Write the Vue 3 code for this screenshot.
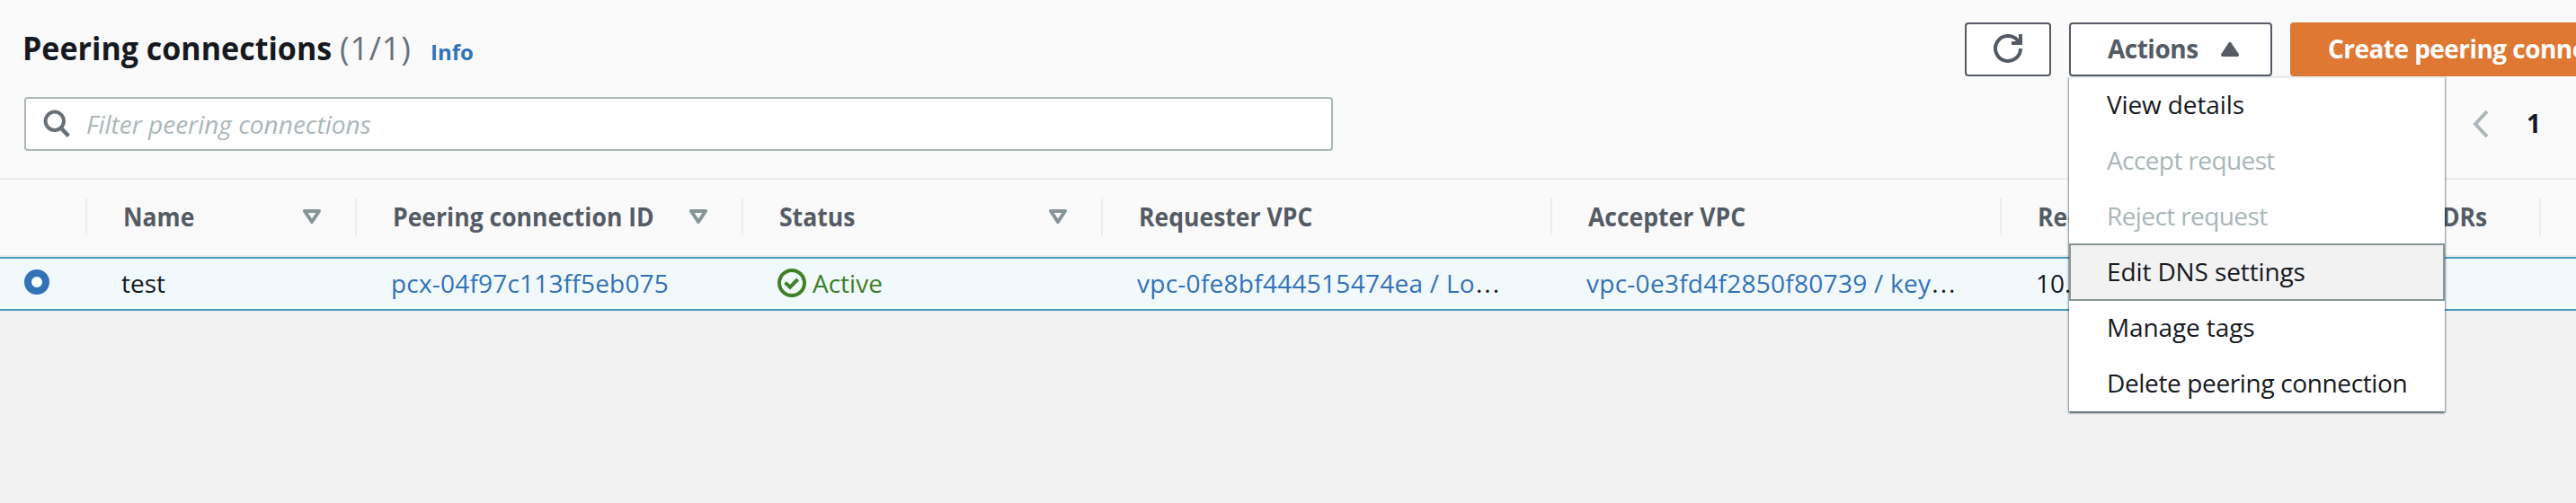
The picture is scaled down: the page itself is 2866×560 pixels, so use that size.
<script setup>
const columns = [
  { label: 'Name', cls: 'w300', sortable: true },
  { label: 'Peering connection ID', cls: 'w430', sortable: true },
  { label: 'Status', cls: 'w400', sortable: true },
  { label: 'Requester VPC', cls: 'w500' },
  { label: 'Accepter VPC', cls: 'w500' },
  { label: 'Requester CIDRs', cls: 'w300' },
  { label: 'Accepter CIDRs', cls: 'w300' }
]
const actions = [
  { label: 'View details' },
  { label: 'Accept request', state: 'disabled' },
  { label: 'Reject request', state: 'disabled' },
  { label: 'Edit DNS settings', state: 'active' },
  { label: 'Manage tags' },
  { label: 'Delete peering connection', state: 'tight' }
]
</script>

<template>
  <div class="page">
    <section class="panel">
      <header class="toolbar">
        <h1><span class="title">Peering connections</span><span class="count">(1/1)</span></h1>
        <a class="info">Info</a>
        <div class="buttons">
          <button class="btn refresh" aria-label="Refresh">
            <svg width="36" height="36" viewBox="0 0 36 36" fill="none" stroke="#545b64" stroke-width="4">
              <path d="M32 18a14 14 0 1 1-3.4-9.2l2.6 3.6" />
              <path d="M32 2v10H22" />
            </svg>
          </button>
          <div class="dropdown">
            <button class="btn toggle">
              <span>Actions</span>
              <svg width="20" height="16" viewBox="0 0 20 16">
                <path d="M10 2 18 14H2z" fill="#545b64" stroke="#545b64" stroke-width="4" stroke-linejoin="round" />
              </svg>
            </button>
            <ul class="menu">
              <li v-for="a in actions" :key="a.label" :class="a.state">{{ a.label }}</li>
            </ul>
          </div>
          <button class="btn primary">Create peering connection</button>
        </div>
      </header>

      <div class="filters">
        <div class="search">
          <svg width="30" height="32" viewBox="0 0 30 32" fill="none" stroke="#687078" stroke-width="4">
            <circle cx="12.8" cy="12.8" r="10.2" />
            <path d="M19.6 20.4 28.4 29.4" stroke-width="4.4" />
          </svg>
          <span>Filter peering connections</span>
        </div>
        <div class="pager">
          <svg width="20" height="32" viewBox="0 0 20 32" fill="none" stroke="#aab7b8" stroke-width="4">
            <path d="M17 2 4 16l13 14" />
          </svg>
          <b>1</b>
        </div>
      </div>

      <div class="thead">
        <div class="sel"></div>
        <div v-for="c in columns" :key="c.label" class="th" :class="c.cls">
          <span>{{ c.label }}</span>
          <svg v-if="c.sortable" width="20" height="16" viewBox="0 0 20 16">
            <path d="M2 2h16l-8 12z" fill="none" stroke="#879596" stroke-width="4" stroke-linejoin="round" />
          </svg>
        </div>
        <div class="th rest"></div>
      </div>

      <div class="row">
        <div class="sel"><i class="radio"></i></div>
        <div class="td w300 name">test</div>
        <div class="td w430 link">pcx-04f97c113ff5eb075</div>
        <div class="td w400 status">
          <svg width="32" height="32" viewBox="0 0 32 32" fill="none" stroke="#3f7f26" stroke-width="4">
            <circle cx="16" cy="16" r="14" />
            <path d="M8.6 15.6 14 20.6 22.6 12" />
          </svg>
          <span>Active</span>
        </div>
        <div class="td w500 vpc"><a class="link">vpc-0fe8bf444515474ea / Lo</a><span class="more">...</span></div>
        <div class="td w500 vpc"><a class="link">vpc-0e3fd4f2850f80739 / key</a><span class="more">...</span></div>
        <div class="td w300">10.0.0.0/16</div>
      </div>
    </section>
  </div>
</template>

<style>
body { background: #f2f2f2; }
</style>

<style scoped>
.page {
  width: 2866px;
  height: 560px;
  overflow: hidden;
  background: #f2f2f2;
  font-family: "Open Sans", "Noto Sans", sans-serif;
  font-size: 28px;
  line-height: 36px;
  color: #16191f;
}
.panel { background: #fafafa; }
.toolbar {
  display: flex;
  align-items: center;
  height: 60px;
  padding: 25px 0 23px 25px;
}
h1 {
  display: flex;
  margin: 0 0 2px;
  width: 454px;
  font-size: 36px;
  line-height: 48px;
  white-space: nowrap;
}
.title {
  width: 353px;
  transform: scaleX(.945);
  transform-origin: left;
}
.count { font-weight: 400; color: #687078; letter-spacing: .8px; }
.info {
  font-size: 24px;
  font-weight: 700;
  color: #3272b6;
  padding-top: 6px;
}
.buttons { display: flex; gap: 20px; margin-left: auto; width: 680px; }
.btn {
  box-sizing: border-box;
  flex: none;
  height: 60px;
  margin: 0;
  padding: 0 0 2px;
  border: 2px solid #545b64;
  border-radius: 4px;
  background: #fff;
  font: 700 28px/36px "Open Sans", "Noto Sans", sans-serif;
  letter-spacing: -.5px;
  color: #545b64;
  white-space: nowrap;
}
.refresh { display: flex; align-items: center; justify-content: center; width: 96px; }
.dropdown { position: relative; }
.toggle { display: flex; align-items: center; gap: 25px; width: 226px; padding-left: 41px; }
.toggle svg { margin-top: 2px; }
.primary {
  width: 420px;
  padding-left: 40px;
  border-color: #df7833;
  background: #df7833;
  color: #fff;
  text-align: left;
  letter-spacing: -.55px;
}
.menu {
  position: absolute;
  z-index: 2;
  top: 60px;
  left: 0;
  box-sizing: border-box;
  width: 418px;
  margin: 0;
  padding: 0 0 1px;
  list-style: none;
  background: #fff;
  box-shadow: 0 2px 2px rgba(0, 28, 36, .5), 1px 1px 2px rgba(0, 28, 36, .3), -1px 1px 2px rgba(0, 28, 36, .3), inset 0 2px #eaeded;
}
.menu li {
  box-sizing: border-box;
  height: 62px;
  padding: 13px 0 0 42px;
  letter-spacing: -.12px;
  white-space: nowrap;
}
.menu .disabled { color: #aab7b8; letter-spacing: -.6px; }
.menu .tight { letter-spacing: -.36px; }
.menu .active {
  height: 64px;
  margin-bottom: -2px;
  padding: 11px 0 0 40px;
  border: 2px solid #879596;
  background: #f2f2f2;
}
.filters {
  display: flex;
  justify-content: space-between;
  height: 60px;
  padding: 0 0 30px 27px;
  border-bottom: 2px solid #eaeded;
}
.search {
  box-sizing: border-box;
  display: flex;
  align-items: center;
  width: 1456px;
  border: 2px solid #aab7b8;
  border-radius: 4px;
  background: #fff;
  padding-left: 19px;
  color: #aab7b8;
  font-style: italic;
}
.search span { margin-left: 18px; }
.pager { display: flex; align-items: center; width: 116px; gap: 41px; }
.pager b { margin-top: -2px; }
.thead {
  display: flex;
  box-sizing: border-box;
  height: 86px;
  padding-top: 21px;
  border-bottom: 2px solid #eaeded;
}
.sel { flex: none; width: 95px; }
.th {
  box-sizing: border-box;
  flex: none;
  display: flex;
  align-items: center;
  justify-content: space-between;
  height: 41px;
  padding: 0 38px 0 40px;
  border-left: 2px solid #eaeded;
  font-weight: 700;
  color: #545b64;
  white-space: nowrap;
}
.th span { transform: scaleX(.948); transform-origin: left; margin: -2px -20px 0 0; }
.th svg { margin-top: -1px; }
.rest { width: 42px; padding: 0; }
.w300 { width: 300px; }
.w400 { width: 400px; }
.w430 { width: 430px; }
.w500 { width: 500px; }
.row {
  display: flex;
  align-items: center;
  box-sizing: border-box;
  height: 60px;
  border: solid #4b9bbd;
  border-width: 2px 0;
  background: #f2f9fd;
}
.td {
  box-sizing: border-box;
  flex: none;
  padding: 0 0 2px 40px;
  white-space: nowrap;
}
.link { color: #3272b6; letter-spacing: .2px; }
.vpc .link { letter-spacing: .27px; }
.more { margin-left: 1px; letter-spacing: 2px; }
.radio {
  display: block;
  box-sizing: border-box;
  width: 28px;
  height: 28px;
  margin: -4px 0 0 27px;
  border: 8px solid #3272b6;
  border-radius: 50%;
  background: #fff;
}
.status { display: flex; align-items: center; gap: 7px; color: #3f7f26; }
</style>
